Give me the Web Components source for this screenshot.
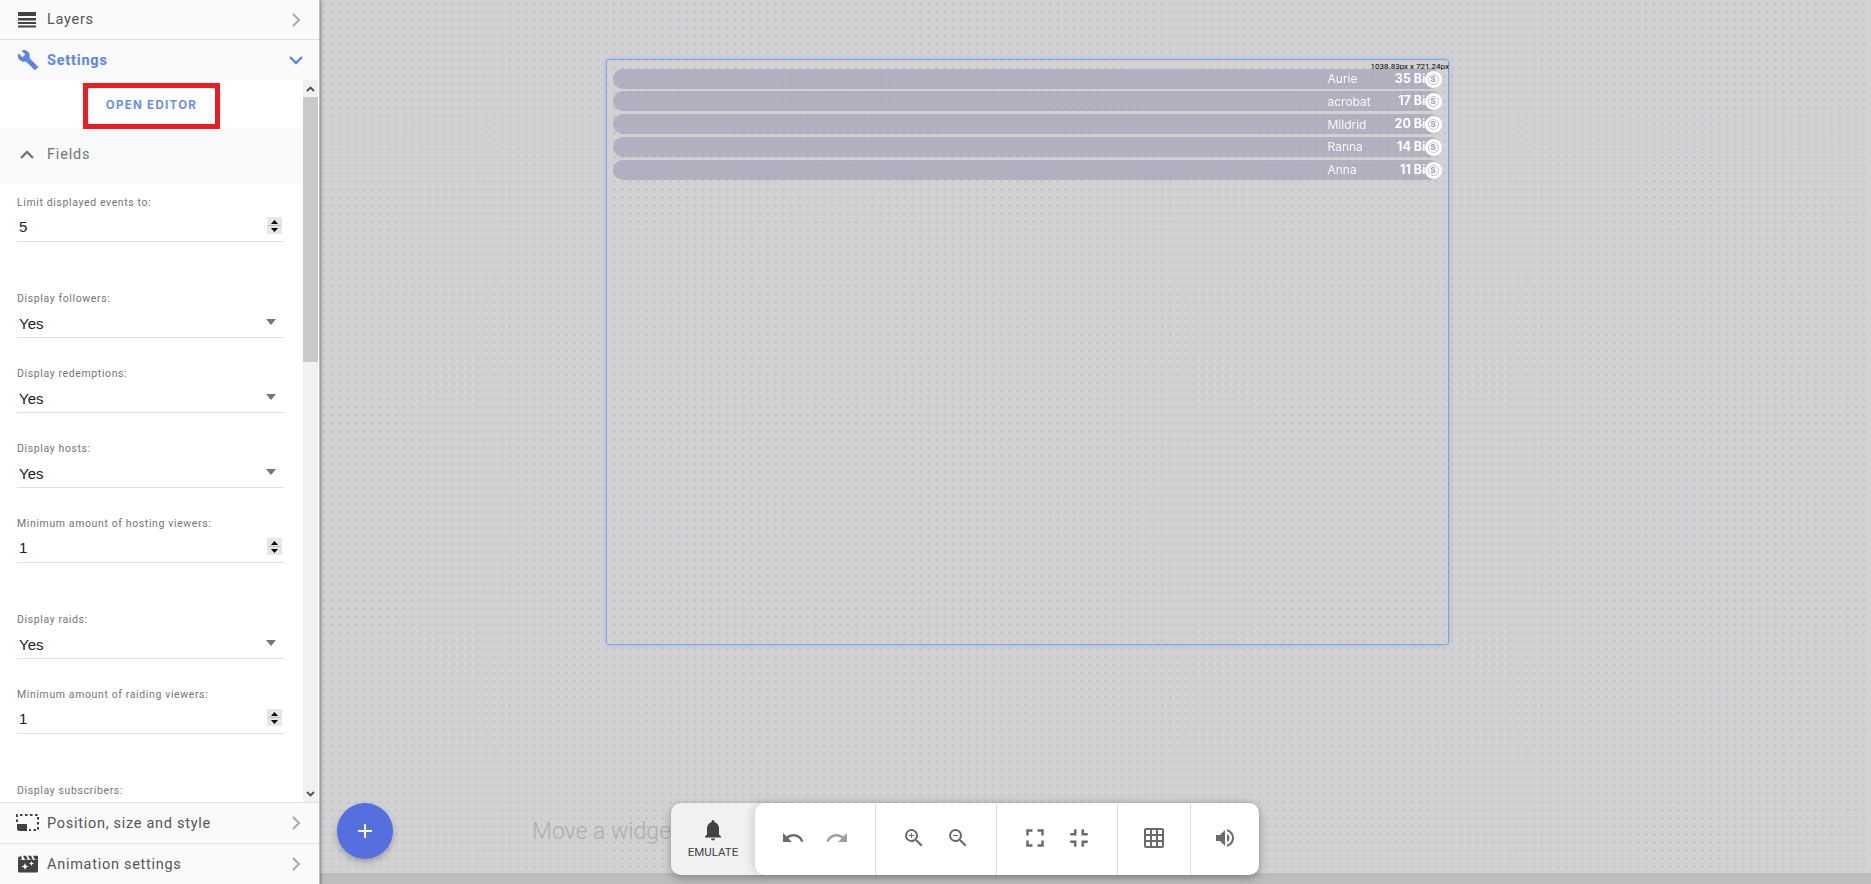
<!DOCTYPE html>
<html lang="en">
<head>
<meta charset="utf-8">
<title>Overlay editor</title>
<style>
    html, body { margin: 0; height: 100%; overflow: hidden; }
    body { font-family: Roboto, sans-serif; }
</style>
</head>
<body>
<editor-app>
    <side-panel slot="side">
        <panel-header title="Layers" icon="layers"></panel-header>
        <panel-header title="Settings" icon="wrench" active></panel-header>
        <settings-scroll>
            <open-editor></open-editor>
            <fields-header></fields-header>
            <number-field label="Limit displayed events to:" value="5"></number-field>
            <select-field label="Display followers:" value="Yes"></select-field>
            <select-field label="Display redemptions:" value="Yes"></select-field>
            <select-field label="Display hosts:" value="Yes"></select-field>
            <number-field label="Minimum amount of hosting viewers:" value="1"></number-field>
            <select-field label="Display raids:" value="Yes"></select-field>
            <number-field label="Minimum amount of raiding viewers:" value="1"></number-field>
            <select-field label="Display subscribers:"></select-field>
        </settings-scroll>
        <panel-header title="Position, size and style" icon="position" style="height:41px"></panel-header>
        <panel-header title="Animation settings" icon="clapper" style="border-bottom:0"></panel-header>
    </side-panel>
    <overlay-canvas slot="main">
        <event-widget size="1038.83px x 721.24px">
            <event-row name="Aurie" amount="35 Bi"></event-row>
            <event-row name="acrobat" amount="17 Bi"></event-row>
            <event-row name="Mildrid" amount="20 Bi"></event-row>
            <event-row name="Ranna" amount="14 Bi"></event-row>
            <event-row name="Anna" amount="11 Bi"></event-row>
        </event-widget>
        <add-button></add-button>
        <bottom-toolbar></bottom-toolbar>
    </overlay-canvas>
</editor-app>

<script>
const ICONS = {
    layers: '<svg width="20" height="18" viewBox="0 0 20 18"><path fill="#424242" d="M1 1h18v4H1zM1 7h18v2.500H1zM1 11h18v2H1zM1 14.600h18v2H1z"/></svg>',
    wrench: '<svg width="22" height="22" viewBox="0 0 24 24"><path fill="currentColor" d="M22.700 19l-9.100-9.100c.9-2.300.4-5-1.500-6.900-2-2-5-2.400-7.400-1.300L9 6 6 9 1.600 4.700C.4 7.100.9 10.100 2.900 12.100c1.900 1.900 4.600 2.400 6.900 1.500l9.100 9.100c.4.400 1 .4 1.400 0l2.300-2.300c.5-.4.5-1.100.1-1.400z"/></svg>',
    position: '<svg width="24" height="20" viewBox="0 0 24 20" style="margin-left:-1px"><path fill="#424242" d="M1 11h10v7H3a2 2 0 0 1-2-2z"/><path fill="none" stroke="#424242" stroke-width="2" stroke-dasharray="2.500 2.500" d="M1 9V2h21v15h-9"/></svg>',
    clapper: '<svg width="22" height="18" viewBox="0 0 22 18"><path fill="#424242" d="M1 2.500 4 .8l1 4H1zM6 .8h3l2 4H8zM11 .8h3l2 4h-3zM16 .8h4a1 1 0 0 1 1 1v3h-3zM1 5h20v11a1.500 1.500 0 0 1-1.500 1.500h-17A1.500 1.500 0 0 1 1 16z"/><path fill="#fff" d="m8 8 1 2.500 2.500 1-2.500 1-1 2.500-1-2.500-2.500-1 2.500-1zM14.500 6l.7 1.800 1.800.7-1.800.7-.7 1.800-.7-1.800-1.800-.7 1.800-.7z"/></svg>',
    chevronRight: '<svg width="24" height="24" viewBox="0 0 24 24"><path fill="none" stroke="currentColor" stroke-width="2" d="m9 6 6 6-6 6"/></svg>',
    chevronDown: '<svg width="24" height="24" viewBox="0 0 24 24"><path fill="none" stroke="currentColor" stroke-width="2.400" d="m6 9 6 6 6-6"/></svg>',
    chevronUp: '<svg width="24" height="24" viewBox="0 0 24 24"><path fill="none" stroke="currentColor" stroke-width="2.400" d="m6 15 6-6 6 6"/></svg>'
};

function tpl(css, html) {
    const t = document.createElement('template');
    t.innerHTML = `<style>${css}</style>${html}`;
    return t;
}

// base class, every element just clones its template into an open root
class Base extends HTMLElement {
    render(t) {
        if (!this.shadowRoot) this.attachShadow({ mode: 'open' });
        this.shadowRoot.appendChild(t.content.cloneNode(true));
    }
}

const appTpl = tpl(`
    :host { display: flex; width: 1871px; height: 884px; }
    ::slotted([slot=side]) { flex: 0 0 320px; }
    ::slotted([slot=main]) { flex: 1; }
`, `<slot name="side"></slot><slot name="main"></slot>`);
customElements.define('editor-app', class extends Base {
    connectedCallback() { this.render(appTpl); }
});

const sideTpl = tpl(`
    :host { display: flex; flex-direction: column; height: 884px; background: #fff;
        box-shadow: 1px 0 3px rgba(0,0,0,.4); position: relative; z-index: 2; border-right: 1px solid #bdbdbd; box-sizing: border-box; }
`, `<slot></slot>`);
customElements.define('side-panel', class extends Base {
    connectedCallback() { this.render(sideTpl); }
});

const headerTpl = tpl(`
    :host { display: flex; align-items: center; height: 40px; flex: none; box-sizing: border-box;
        background: #fafafa; color: #555; border-bottom: 1px solid #e0e0e0; padding: 0 17px;
        font: 400 14.500px Roboto, sans-serif; letter-spacing: .72px; }
    :host([active]) { color: #5b86e0; font-weight: 700; border-bottom: 0; letter-spacing: .8px; }
    .icon { width: 30px; display: flex; align-items: center; }
    .title { flex: 1; }
    .arrow { display: flex; color: #aaa; margin-right: -6px; }
    :host([active]) .arrow { color: #5b86e0; }
`, `<span class="icon"></span><span class="title"></span><span class="arrow"></span>`);
customElements.define('panel-header', class extends Base {
    connectedCallback() {
        this.render(headerTpl);
        const r = this.shadowRoot;
        r.querySelector('.icon').innerHTML = ICONS[this.getAttribute('icon')];
        r.querySelector('.title').textContent = this.getAttribute('title');
        r.querySelector('.arrow').innerHTML = this.hasAttribute('active') ? ICONS.chevronDown : ICONS.chevronRight;
    }
});

const scrollTpl = tpl(`
    :host { display: flex; height: 723px; flex: none; overflow: hidden; border-bottom: 1px solid #e0e0e0; box-sizing: border-box; }
    .content { flex: 1; min-width: 0; height: 722px; overflow: hidden; }
    .bar { flex: 0 0 15px; margin-right: 1px; background: #f1f1f1; display: flex; flex-direction: column; position: relative; }
    .btn { height: 17px; display: flex; align-items: center; justify-content: center; }
    .thumb { height: 265px; background: #c9c9c9; }
    .spacer { flex: 1; }
`, `<div class="content"><slot></slot></div>
    <div class="bar">
        <div class="btn"><svg width="9" height="6" viewBox="0 0 9 6"><path fill="none" stroke="#505050" stroke-width="1.800" d="m1 5 3.500-3.500L8 5"/></svg></div>
        <div class="thumb"></div><div class="spacer"></div>
        <div class="btn"><svg width="9" height="6" viewBox="0 0 9 6"><path fill="none" stroke="#505050" stroke-width="1.800" d="m1 1 3.500 3.500L8 1"/></svg></div>
    </div>`);
customElements.define('settings-scroll', class extends Base {
    connectedCallback() { this.render(scrollTpl); }
});

const openTpl = tpl(`
    :host { display: flex; justify-content: center; height: 48px; }
    .btn { width: 127px; height: 34px; margin: 3px 0 0 0; padding-bottom: 2px; border: 5px solid #ed1c24; display: flex; align-items: center; justify-content: center;
        color: #6a8fe3; font: 700 11.500px Inter, sans-serif; letter-spacing: 1.300px; }
`, `<div class="btn">OPEN EDITOR</div>`);
customElements.define('open-editor', class extends Base {
    connectedCallback() { this.render(openTpl); }
});

const fieldsTpl = tpl(`
    :host { display: flex; align-items: center; height: 56px; background: #fafafa; color: #757575;
        font: 400 14.500px Roboto, sans-serif; letter-spacing: .8px; padding: 0 0 3px 15px; box-sizing: border-box; margin-bottom: 11px; }
    svg { margin-right: 8px; }
`, `${ICONS.chevronUp}<span>Fields</span>`);
customElements.define('fields-header', class extends Base {
    connectedCallback() { this.render(fieldsTpl); }
});

const fieldCss = `
    :host { display: block; padding: 0 17px 0 17px; width: 267px; }
    label { display: block; font: 400 10.500px Roboto, sans-serif; letter-spacing: .62px; color: #757575; height: 15px; line-height: 15px; }
    .input { display: flex; align-items: center; justify-content: space-between; height: 30px; margin-top: 1px; border-bottom: 1px solid #e0e0e0;
        font: 400 15px "Liberation Sans", sans-serif; color: #212121; padding: 0 1px 0 2px; }
`;
const numberTpl = tpl(fieldCss + `
    :host { height: 96px; }
    .spin { width: 15px; height: 17px; background: #bdbdbd; border: 1px solid #e8e8e8; box-sizing: border-box; display: flex; flex-direction: column; gap: 1px; margin: -1px 1px 0 0; }
    .spin span { flex: 1; background: #e6e6e6; display: flex; align-items: center; justify-content: center; }
`, `<label></label><div class="input"><span class="val"></span>
    <span class="spin"><span><svg width="7" height="4" viewBox="0 0 7 4"><path d="M3.500 0 7 4H0z"/></svg></span><span><svg width="7" height="4" viewBox="0 0 7 4"><path d="M0 0h7L3.500 4z"/></svg></span></span></div>`);
customElements.define('number-field', class extends Base {
    connectedCallback() {
        this.render(numberTpl);
        this.shadowRoot.querySelector('label').textContent = this.getAttribute('label');
        this.shadowRoot.querySelector('.val').textContent = this.getAttribute('value');
    }
});

const selectTpl = tpl(fieldCss + `
    :host { height: 75px; }
    .input { box-sizing: border-box; height: 31px; padding-top: 2px; }
    i { border: 5px solid transparent; border-top: 6px solid #757575; border-bottom: 0; margin: -2px 7px 0 0; }
`, `<label></label><div class="input"><span class="val"></span><i></i></div>`);
customElements.define('select-field', class extends Base {
    connectedCallback() {
        this.render(selectTpl);
        this.shadowRoot.querySelector('label').textContent = this.getAttribute('label');
        // the last field is scrolled away under the panel, only its label shows
        if (this.hasAttribute('value')) this.shadowRoot.querySelector('.val').textContent = this.getAttribute('value');
        else { this.shadowRoot.querySelector('.input').remove(); this.style.height = '15px'; }
    }
});

const canvasTpl = tpl(`
    :host { display: block; position: relative; height: 884px; overflow: hidden; background: #bdbdbd; }
    .paper { height: 873px; background-color: #d2d2d2;
        background-image: radial-gradient(circle at center, #bcc0da 0, #bcc0da .9px, rgba(188,192,218,.2) 1.300px, transparent 1.700px);
        background-size: 8.070px 8.070px; }
    .hint { position: absolute; left: 212px; top: 818px; font: 300 23px Roboto, sans-serif; color: #aeaeae; white-space: nowrap; }
`, `<div class="paper"></div><div class="hint">Move a widget</div><slot></slot>`);
customElements.define('overlay-canvas', class extends Base {
    connectedCallback() { this.render(canvasTpl); }
});

const widgetTpl = tpl(`
    :host { position: absolute; left: 286px; top: 59px; width: 843px; height: 586px; box-sizing: border-box;
        border: 1.500px solid #7ea2e8; border-radius: 3px; box-shadow: 0 0 4px rgba(90,130,220,.35);
        display: flex; flex-direction: column; gap: 2.750px; padding: 8.500px 7.500px 0 5.500px; }
    .size { position: absolute; right: -1px; top: 1.500px; font: 400 8px Roboto, sans-serif; color: #000; line-height: 10px; white-space: nowrap; }
`, `<div class="size"></div><slot></slot>`);
customElements.define('event-widget', class extends Base {
    connectedCallback() {
        this.render(widgetTpl);
        this.shadowRoot.querySelector('.size').textContent = this.getAttribute('size');
    }
});

const rowTpl = tpl(`
    :host { display: flex; align-items: center; height: 20px; flex: none; border-radius: 10px; background: rgba(155,148,175,.55); position: relative; color: #fff; }
    .name { position: absolute; left: 715px; font: 400 12px Inter, sans-serif; color: #f8f8f8; filter: blur(.25px); }
    .amount { position: absolute; right: 15px; font: 700 12.500px Inter, sans-serif; white-space: nowrap; top: 0; line-height: 20px; filter: blur(.25px); }
    .coin { position: absolute; right: -1px; top: 2px; width: 17px; height: 17px; border-radius: 50%; background: #fff; display: flex; align-items: center; justify-content: center; }
    .coin b { font: 700 8px Inter, sans-serif; color: #9a96a6; border: 1.500px solid #c2c0ca; border-radius: 50%; width: 9px; height: 9px; line-height: 9px; text-align: center; filter: blur(.3px); }
`, `<span class="name"></span><span class="amount"></span><span class="coin"><b>S</b></span>`);
customElements.define('event-row', class extends Base {
    connectedCallback() {
        this.render(rowTpl);
        this.shadowRoot.querySelector('.name').textContent = this.getAttribute('name');
        this.shadowRoot.querySelector('.amount').textContent = this.getAttribute('amount');
    }
});

const addTpl = tpl(`
    :host { position: absolute; left: 17px; top: 803px; width: 56px; height: 56px; border-radius: 50%; background: #5570de;
        box-shadow: 0 3px 6px rgba(0,0,0,.25); display: flex; align-items: center; justify-content: center; }
`, `<svg width="16" height="16" viewBox="0 0 16 16"><path fill="#fff" d="M7 1h2v6h6v2H9v6H7V9H1V7h6z"/></svg>`);
customElements.define('add-button', class extends Base {
    connectedCallback() { this.render(addTpl); }
});

const barTpl = tpl(`
    :host { position: absolute; left: 351px; top: 803px; height: 72px; width: 588px; display: flex; border-radius: 10px;
        box-shadow: 0 3px 10px rgba(0,0,0,.3); color: #6b6b6b; }
    .emulate { flex: 0 0 84px; margin-right: -10px; padding-right: 10px; background: #f1f1f1; border-radius: 10px 0 0 10px; display: flex; flex-direction: column; align-items: center; justify-content: center; gap: 4px;
        font: 400 11.500px Roboto, sans-serif; color: #424242; }
    .tools { flex: 1; display: flex; background: #fff; border-radius: 10px; position: relative; box-shadow: -3px 0 8px rgba(0,0,0,.12); }
    .group { display: flex; align-items: center; justify-content: center; gap: 20px; border-right: 1px solid #e0e0e0; box-sizing: border-box; padding-bottom: 3px; }
    .group:last-child { border: 0; }
    .group svg path { fill: #6b6b6b; }
    .group svg.off path { fill: #9e9e9e; }
    .wide { gap: 14px; }
    .wide svg { width: 30px; height: 30px; }
`, `<div class="emulate">
        <svg width="20" height="22" viewBox="0 0 20 22"><path fill="#424242" d="M10 21.500c1.100 0 2-.9 2-2H8c0 1.100.9 2 2 2zM16 15.500v-6c0-3.100-1.600-5.600-4.500-6.300V2.500a1.500 1.500 0 0 0-3 0v.7C5.600 3.900 4 6.400 4 9.500v6l-2 2v1h16v-1z"/></svg>
        <span>EMULATE</span></div>
    <div class="tools">
        <div class="group" style="width:121px">
            <svg width="24" height="24" viewBox="0 0 24 24"><path d="M12.500 8c-2.650 0-5.050.99-6.900 2.600L2 7v9h9l-3.620-3.620c1.390-1.160 3.160-1.880 5.120-1.880 3.540 0 6.550 2.310 7.600 5.500l2.370-.78C21.080 11.030 17.150 8 12.500 8z"/></svg>
            <svg class="off" width="24" height="24" viewBox="0 0 24 24"><path d="M18.400 10.600C16.550 8.990 14.150 8 11.500 8c-4.650 0-8.580 3.030-9.960 7.220L3.900 16c1.050-3.190 4.050-5.500 7.600-5.500 1.950 0 3.730.72 5.120 1.880L13 16h9V7z"/></svg>
        </div>
        <div class="group" style="width:121px">
            <svg width="24" height="24" viewBox="0 0 24 24"><path d="M15.500 14h-.79l-.28-.27A6.470 6.470 0 0 0 16 9.500 6.500 6.500 0 1 0 9.500 16c1.610 0 3.090-.59 4.230-1.570l.27.28v.79l5 4.990L20.490 19zm-6 0C7.010 14 5 11.990 5 9.500S7.010 5 9.500 5 14 7.010 14 9.500 11.990 14 9.500 14z"/><path d="M12 10h-2v2H9v-2H7V9h2V7h1v2h2z"/></svg>
            <svg width="24" height="24" viewBox="0 0 24 24"><path d="M15.500 14h-.79l-.28-.27A6.470 6.470 0 0 0 16 9.500 6.500 6.500 0 1 0 9.500 16c1.610 0 3.090-.59 4.230-1.570l.27.28v.79l5 4.990L20.490 19zm-6 0C7.010 14 5 11.990 5 9.500S7.010 5 9.500 5 14 7.010 14 9.500 11.990 14 9.500 14zM7 9h5v1H7z"/></svg>
        </div>
        <div class="group wide" style="width:121px">
            <svg viewBox="0 0 24 24"><path d="M7 14H5v5h5v-2H7zm-2-4h2V7h3V5H5zm12 7h-3v2h5v-5h-2zM14 5v2h3v3h2V5z"/></svg>
            <svg viewBox="0 0 24 24"><path d="M5 16h3v3h2v-5H5zm3-8H5v2h5V5H8zm6 11h2v-3h3v-2h-5zm2-11V5h-2v5h5V8z"/></svg>
        </div>
        <div class="group" style="width:73px">
            <svg width="24" height="24" viewBox="0 0 24 24"><path d="M20 2H4c-1.100 0-2 .9-2 2v16c0 1.100.9 2 2 2h16c1.100 0 2-.9 2-2V4c0-1.100-.9-2-2-2zM8 20H4v-4h4zm0-6H4v-4h4zm0-6H4V4h4zm6 12h-4v-4h4zm0-6h-4v-4h4zm0-6h-4V4h4zm6 12h-4v-4h4zm0-6h-4v-4h4zm0-6h-4V4h4z"/></svg>
        </div>
        <div class="group" style="flex:1">
            <svg width="24" height="24" viewBox="0 0 24 24"><path d="M3 9v6h4l5 5V4L7 9zm13.500 3c0-1.770-1.020-3.290-2.500-4.030v8.050c1.480-.73 2.500-2.250 2.500-4.020zM14 3.230v2.060c2.890.86 5 3.540 5 6.710s-2.110 5.850-5 6.710v2.060c4.010-.91 7-4.490 7-8.770s-2.990-7.860-7-8.770z"/></svg>
        </div>
    </div>`);
customElements.define('bottom-toolbar', class extends Base {
    connectedCallback() { this.render(barTpl); }
});
</script>
</body>
</html>
